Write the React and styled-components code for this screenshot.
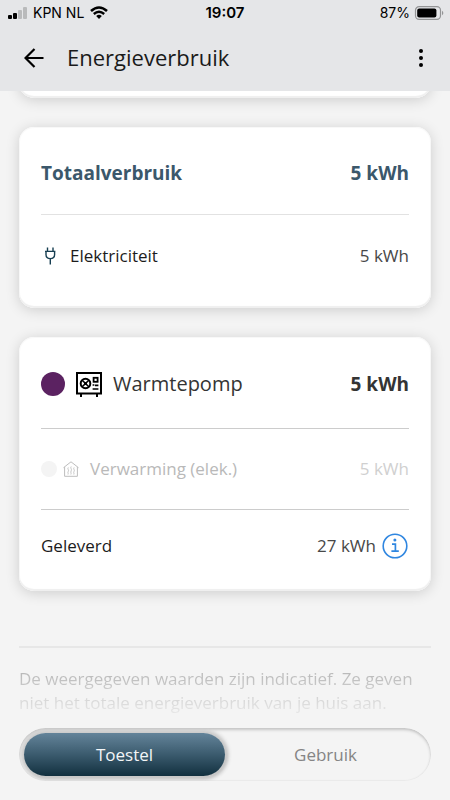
import React, { useState } from "react";
import styled, { createGlobalStyle } from "styled-components";

const GlobalStyle = createGlobalStyle`
  * { box-sizing: border-box; }
  body {
    margin: 0;
    background: #f4f4f4;
    color: #1c1c1c;
    font-family: "Open Sans", "Noto Sans", sans-serif;
    font-size: 17px;
    line-height: 24px;
  }
  button { font: inherit; color: inherit; border: 0; padding: 0; background: none; cursor: pointer; }
  svg { display: block; flex: none; }
  h1, h2, p { margin: 0; }
`;

const Page = styled.div`
  display: flex;
  flex-direction: column;
  height: 100vh;
`;

const Header = styled.header`
  flex: none;
  background: #e5e6e8;
  color: #000;
`;

const StatusBar = styled.div`
  display: grid;
  grid-template-columns: 1fr auto 1fr;
  align-items: center;
  height: 25px;
  padding: 0 6px;
  font-family: Inter, sans-serif;
  font-size: 14px;
`;

const StatusGroup = styled.div`
  display: flex;
  align-items: center;
  gap: ${(p) => p.$gap}px;
  justify-content: ${(p) => (p.$end ? "flex-end" : "flex-start")};
`;

const Clock = styled.time`
  font-size: 15px;
  font-weight: 600;
`;

const AppBar = styled.div`
  display: flex;
  align-items: center;
  height: 66px;
  padding: 0 16px 0 20px;
  gap: 20px;
`;

const IconButton = styled.button`
  display: flex;
  align-items: center;
  justify-content: center;
  width: 27px;
  height: 44px;
`;

const Title = styled.h1`
  flex: 1;
  font-size: 22px;
  line-height: 30px;
  padding-bottom: 2px;
  font-weight: 400;
  color: #1a1a1a;
`;

const Content = styled.main`
  flex: 1;
  min-height: 0;
  overflow: hidden;
  display: flex;
  flex-direction: column;
  padding: 0 19px;
`;

const Card = styled.section`
  flex: none;
  margin-bottom: 29px;
  padding: 5px 22px 10px;
  background: #fff;
  border-radius: 15px;
  box-shadow: inset 0 -2px 1px #efefef, inset 0 0 1px 1px #f8f8f8, 0 2px 14px rgba(0, 0, 0, 0.16);
`;

const ScrolledCard = styled(Card)`
  height: 40px;
  margin-top: -33px;
`;

const Row = styled.div`
  display: flex;
  align-items: center;
  justify-content: space-between;
  height: ${(p) => p.$height}px;
  padding-bottom: ${(p) => (p.$raised ? 2 : 0)}px;
  color: ${(p) => (p.$muted ? "#b9b9b9" : "inherit")};
  border-top: ${(p) => (p.$line ? `1px solid ${p.$line}` : "0")};
`;

const Label = styled.div`
  display: flex;
  align-items: center;
  gap: ${(p) => p.$gap || 11}px;
`;

const Name = styled.h2`
  font-size: ${(p) => p.$size}px;
  line-height: 26px;
  font-weight: ${(p) => p.$weight};
  color: ${(p) => p.$color};
`;

const Total = styled.strong`
  font-size: 19px;
  line-height: 26px;
  font-weight: 700;
  color: ${(p) => p.$color};
`;

const Value = styled.span`
  display: flex;
  align-items: center;
  gap: 6px;
  color: ${(p) => (p.$muted ? "#d0d0d0" : "#484848")};
`;

const Dot = styled.span`
  width: ${(p) => p.$size}px;
  height: ${(p) => p.$size}px;
  border-radius: 50%;
  background: ${(p) => p.$color};
`;

const InfoButton = styled.button`
  color: #2f86e0;
`;

const Note = styled.p`
  flex: none;
  margin-top: 26px;
  padding-top: 19px;
  border-top: 2px solid #e7e7e7;
  background: linear-gradient(#b4b4b4 20px, #f2f2f2 76px) text;
  color: transparent;
`;

const Footer = styled.footer`
  flex: none;
  padding: 0 19px 19px;
`;

const ToggleFrame = styled.div`
  overflow: hidden;
  border-radius: 27px;
`;

const Toggle = styled.div`
  display: grid;
  grid-template-columns: 1fr 1fr;
  padding: 5px;
  border-radius: 27px;
  background: #f4f4f4;
  box-shadow: inset 0 2px 3px #c4c4c4, inset 0 0 1px 1px #ececec;
`;

const ToggleButton = styled.button`
  height: 43px;
  border-radius: 22px;
  color: #858585;
  &[aria-pressed="true"] {
    color: #f3f6f8;
    background: linear-gradient(#64849a, #3b5b6e 50%, #12303f);
    box-shadow: 0 0 4px 3px #cccccc, 1px 1px 4px #777;
  }
`;

function Signal() {
  return (
    <svg width="21" height="14" aria-hidden="true">
      <rect x="2" y="9" width="4" height="4" rx="1" />
      <rect x="7" y="7" width="4" height="6" rx="1" />
      <rect x="12" y="4" width="4" height="9" rx="1" fill="#b9babb" />
      <rect x="17" y="1" width="4" height="12" rx="1" fill="#b9babb" />
    </svg>
  );
}

function Wifi() {
  return (
    <svg width="18" height="14" viewBox="0 0 18 14" fill="none" stroke="#000" aria-hidden="true">
      <path d="M1 5Q9-2 17 5" strokeWidth="2.6" />
      <path d="M3.8 8Q9 3.5 14.2 8" strokeWidth="2.4" />
      <path d="M6.2 10Q9 7.6 11.8 10L9 13Z" fill="#000" stroke="none" />
    </svg>
  );
}

function Battery() {
  return (
    <svg width="30" height="14" viewBox="0 0 30 14" aria-hidden="true">
      <rect x="1.5" y=".7" width="25" height="12.6" rx="3.6" fill="none" stroke="#949596" strokeWidth="1.2" />
      <rect x="3.2" y="2.4" width="19.2" height="9.2" rx="2" />
      <path d="M28 4.8c1.8.7 1.8 3.7 0 4.4z" fill="#949596" />
    </svg>
  );
}

function BackArrow() {
  return (
    <svg width="20" height="20" viewBox="0 0 20 20" fill="none" stroke="#000" strokeWidth="2.2" aria-hidden="true">
      <path d="M19.5 10H1.8M10.5 1l-9 9 9 9" />
    </svg>
  );
}

function Dots() {
  return (
    <svg width="6" height="20" aria-hidden="true">
      <circle cx="3" cy="3" r="2" />
      <circle cx="3" cy="10" r="2" />
      <circle cx="3" cy="17" r="2" />
    </svg>
  );
}

function Plug() {
  return (
    <svg width="18" height="18" viewBox="0 0 18 18" fill="none" stroke="#173f52" strokeWidth="1.4" aria-hidden="true">
      <path d="M6.5.5V4M12 .5V4M4 4.4h10.4M5 4.4v3.1c0 2.5 1.9 4.1 4.3 4.1s4.3-1.6 4.3-4.1V4.4M9.3 11.6v6" />
    </svg>
  );
}

function HeatPump() {
  return (
    <svg width="26" height="26" viewBox="0 0 26 26" fill="none" stroke="#000" aria-hidden="true">
      <rect x="1" y="2" width="24" height="20.5" strokeWidth="2" />
      <path d="M5 22v4M21 22v4" strokeWidth="2" />
      <circle cx="9.5" cy="12.5" r="4.8" strokeWidth="2" />
      <path d="M6.2 9.2l6.6 6.6M12.8 9.2l-6.6 6.6" strokeWidth="1.6" />
      <circle cx="9.5" cy="12.5" r="1.5" fill="#000" stroke="none" />
      <rect x="17.6" y="6.8" width="4" height="4" strokeWidth="1.8" />
      <path d="M16.6 14h1.8M16.6 18h5.8M19 14.4h3.4" strokeWidth="1.6" />
    </svg>
  );
}

function HeatedHouse() {
  return (
    <svg width="16" height="16" viewBox="0 0 16 16" fill="none" stroke="#bdbdbd" aria-hidden="true">
      <path d="M.5 6.7L8 .8l7.5 5.9M1.6 6v9.3h12.8V6" />
      <path d="M5.3 6.5c-1.3 1.5 1 2.2 0 3.8s.4 2.1-.3 3.2M8.2 5.5c-1.3 1.7 1 2.5 0 4.3s.4 2.4-.3 3.7M11.1 6.5c-1.3 1.5 1 2.2 0 3.8s.4 2.1-.3 3.2" strokeWidth=".9" />
    </svg>
  );
}

function Info() {
  return (
    <svg width="27" height="26" viewBox="0 0 27 26" fill="none" stroke="currentColor" aria-hidden="true">
      <circle cx="13" cy="13" r="11.8" strokeWidth="1.6" />
      <path d="M10 11.2h3.4v7M9.4 18.2h7.4" strokeWidth="1.7" />
      <circle cx="12.9" cy="7.1" r="1.5" fill="currentColor" stroke="none" />
    </svg>
  );
}

export default function App() {
  const [view, setView] = useState("Toestel");
  return (
    <Page>
      <GlobalStyle />
      <Header>
        <StatusBar>
          <StatusGroup $gap={6}>
            <Signal />
            <span>KPN NL</span>
            <Wifi />
          </StatusGroup>
          <Clock>19:07</Clock>
          <StatusGroup $gap={4} $end>
            <span>87%</span>
            <Battery />
          </StatusGroup>
        </StatusBar>
        <AppBar>
          <IconButton aria-label="Terug"><BackArrow /></IconButton>
          <Title>Energieverbruik</Title>
          <IconButton aria-label="Meer opties"><Dots /></IconButton>
        </AppBar>
      </Header>
      <Content>
        <ScrolledCard />
        <Card>
          <Row $height={82}>
            <Name $size={19} $weight={700} $color="#3b586b">Totaalverbruik</Name>
            <Total $color="#3b586b">5 kWh</Total>
          </Row>
          <Row $height={84} $line="#e2e2e2" $raised>
            <Label><Plug />Elektriciteit</Label>
            <Value>5 kWh</Value>
          </Row>
        </Card>
        <Card>
          <Row $height={86} $raised>
            <Label>
              <Dot $size={24} $color="#5b2261" />
              <HeatPump />
              <Name $size={20} $weight={500} $color="#343434">Warmtepomp</Name>
            </Label>
            <Total $color="#343434">5 kWh</Total>
          </Row>
          <Row $height={81} $line="#cccccc" $muted>
            <Label>
              <Label $gap={6}>
                <Dot $size={16} $color="#f4f4f4" />
                <HeatedHouse />
              </Label>
              Verwarming (elek.)
            </Label>
            <Value $muted>5 kWh</Value>
          </Row>
          <Row $height={72} $line="#cccccc">
            <Label>Geleverd</Label>
            <Value>
              27 kWh
              <InfoButton aria-label="Informatie over geleverde energie"><Info /></InfoButton>
            </Value>
          </Row>
        </Card>
        <Note>
          De weergegeven waarden zijn indicatief. Ze geven niet het totale energieverbruik van je huis aan.
        </Note>
      </Content>
      <Footer>
        <ToggleFrame>
          <Toggle role="group" aria-label="Weergave">
            {["Toestel", "Gebruik"].map((name) => (
              <ToggleButton key={name} aria-pressed={view === name} onClick={() => setView(name)}>
                {name}
              </ToggleButton>
            ))}
          </Toggle>
        </ToggleFrame>
      </Footer>
    </Page>
  );
}
